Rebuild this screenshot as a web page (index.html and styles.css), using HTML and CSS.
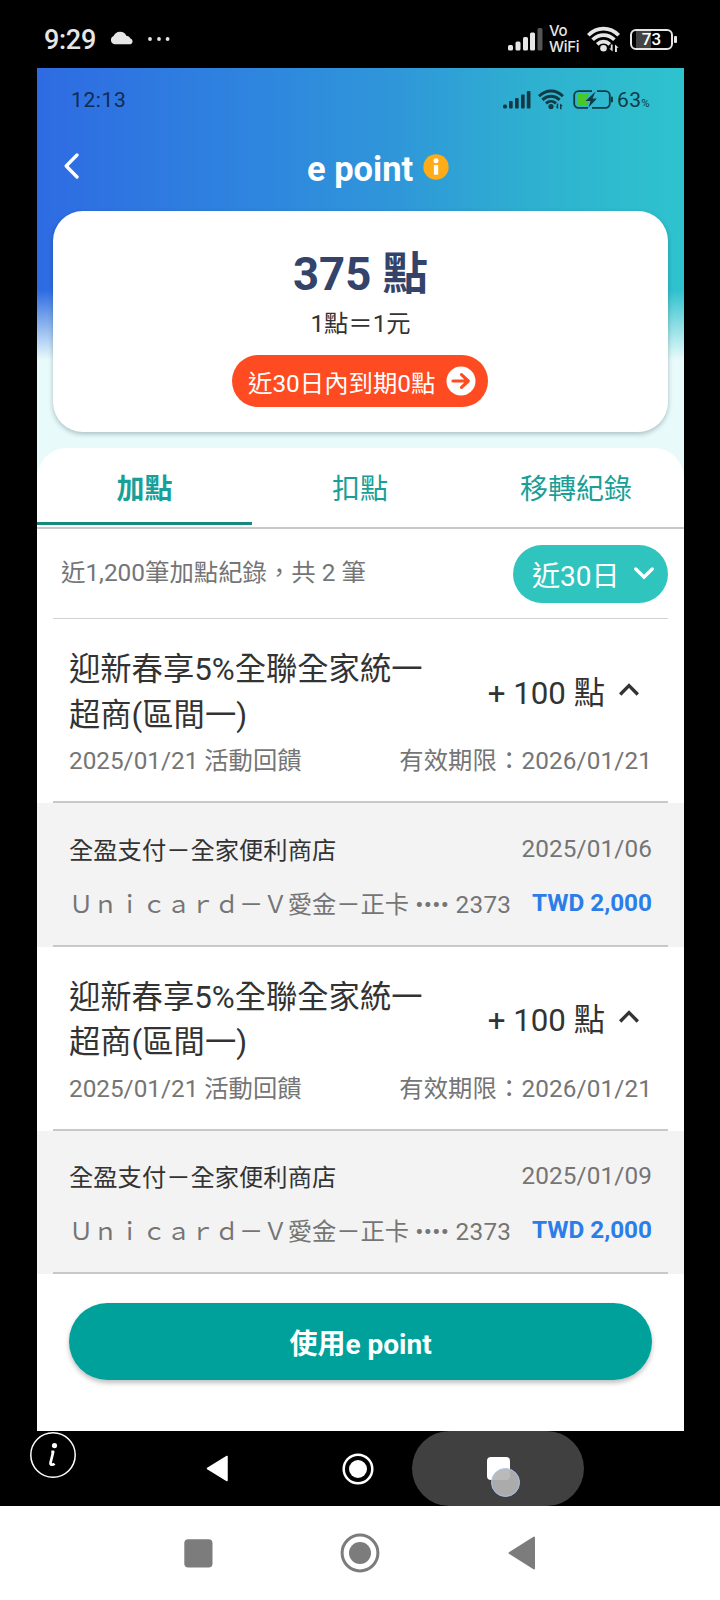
FILE: index.html
```html
<!DOCTYPE html>
<html lang="zh-Hant">
<head>
<meta charset="utf-8">
<title>e point</title>
<link rel="stylesheet" href="styles.css">
</head>
<body>
<svg width="0" height="0" class="defs">
  <symbol id="wifi" viewBox="0 0 33 26">
    <g fill="none" stroke="currentColor" stroke-width="3.7">
      <path d="M1.3 9.2C10 .3 23 .3 31.7 9.2"/>
      <path d="M5.600 13.800c6.300-6.200 15.500-6.200 21.800 0"/>
      <path d="M10.2 18.300c3.700-3.500 8.900-3.500 12.600 0"/>
    </g>
    <circle cx="16.500" cy="22.300" r="3.300" fill="currentColor"/>
    <path d="M25.600 18.500v7l-3.400-3h1.600v-4zM28 26v-7.500l3.600 3.200h-1.700V26z" fill="currentColor"/>
  </symbol>
</svg>

<header class="statusbar">
  <span class="clock">9:29</span>
  <svg class="cloud" width="24" height="14" viewBox="0 0 24 14"><path d="M4.5 13.2A4.3 4.3 0 0 1 3.6 5 7 7 0 0 1 16.400 4.700 5 5 0 0 1 20.500 7.600 3 3 0 0 1 20.800 13.200Z" fill="#e6e6e6"/></svg>
  <svg class="more" width="22" height="4" viewBox="0 0 22 4" fill="#e6e6e6"><circle cx="2" cy="2" r="1.9"/><circle cx="11" cy="2" r="1.9"/><circle cx="19.600" cy="2" r="1.900"/></svg>
  <div class="status-right">
    <svg width="35" height="23" viewBox="0 0 35 23" fill="#e6e6e6"><rect x="0" y="17" width="5" height="5.500" rx="1.500"/><rect x="7.500" y="13.500" width="5" height="9" rx="1.500"/><rect x="15" y="9" width="5" height="13.500" rx="1.500"/><rect x="22" y="4.500" width="5" height="18" rx="1.500"/><rect x="29.500" y="0" width="5" height="22.500" rx="1.500" fill="#555"/></svg>
    <span class="vowifi">Vo<br>WiFi</span>
    <svg class="wifi-big" width="33" height="26"><use href="#wifi"/></svg>
    <span class="battery"><span>73</span></span>
  </div>
</header>

<main class="app">
  <div class="inner-status">
    <span>12:13</span>
    <div class="inner-icons">
      <svg width="28" height="18" viewBox="0 0 28 18" fill="#103a44"><rect x="0" y="13.500" width="4" height="4" rx="1.500"/><rect x="6" y="10" width="3.700" height="7.500" rx="1"/><rect x="12" y="7" width="3.700" height="10.500" rx="1"/><rect x="18" y="3.500" width="3.700" height="14" rx="1"/><rect x="23.800" y="0" width="3.700" height="17.500" rx="1"/></svg>
      <svg class="wifi-small" width="26" height="20.500"><use href="#wifi"/></svg>
      <svg class="charging" width="40" height="19" viewBox="0 0 40 19"><path d="M4 4.800Q4 4 5 4H16L12 11h4l-2 4H5q-1 0-1-1z" fill="#4bc829"/><path d="M19 1.200H5.500a4.300 4.300 0 0 0-4.300 4.300v8a4.300 4.300 0 0 0 4.300 4.300H15M24 1.200h8.500a4.300 4.300 0 0 1 4.300 4.300v8a4.300 4.300 0 0 1-4.300 4.300H19" fill="none" stroke="#103a44" stroke-width="1.800"/><path d="M22.500 1.500 12.500 11h5l-2 6.500L24 8.500h-4.500z" fill="#103a44"/><rect x="37.900" y="6.500" width="2" height="6" rx="1" fill="#103a44"/></svg>
      <span class="pct">63<small>%</small></span>
    </div>
  </div>

  <div class="titlebar">
    <svg class="back" width="15" height="26" viewBox="0 0 15 26"><path d="M13 2 2.200 13 13 24" fill="none" stroke="#fff" stroke-width="3.300" stroke-linecap="round" stroke-linejoin="round"/></svg>
    <h1>e point</h1>
    <svg class="info" width="26" height="26" viewBox="0 0 26 26"><circle cx="13" cy="13" r="12.700" fill="#ffac18"/><circle cx="13" cy="6.700" r="2.500" fill="#fff"/><rect x="10.900" y="11" width="4.300" height="9.700" fill="#fff"/></svg>
  </div>

  <section class="card">
    <div class="balance">375 點</div>
    <div class="rate">1點＝1元</div>
    <div class="expiring"><span>近30日內到期0點</span>
      <svg width="30" height="30" viewBox="0 0 30 30"><circle cx="15" cy="15" r="14.500" fill="#fff"/><path d="M7 15h15M15.500 8.700 22.300 15l-6.800 6.300" fill="none" stroke="#ff4b21" stroke-width="3.200" stroke-linecap="round" stroke-linejoin="round"/></svg>
    </div>
  </section>

  <section class="sheet">
    <nav class="tabs">
      <span class="tab active">加點</span><span class="tab">扣點</span><span class="tab">移轉紀錄</span>
    </nav>
    <div class="filter">
      <span class="count">近1,200筆加點紀錄，共 2 筆</span>
      <span class="range">近30日<svg width="20" height="13" viewBox="0 0 20 13"><path d="m1.800 2 8.200 8.200L18.200 2" fill="none" stroke="#fff" stroke-width="3.300" stroke-linecap="round"/></svg></span>
    </div>

    <article class="entry">
      <div class="summary">
        <div class="headline"><h2>迎新春享5%全聯全家統一超商(區間一)</h2>
          <span class="points">+ 100 點<svg width="20" height="13" viewBox="0 0 20 13"><path d="m1.200 11.500 8.800-9 8.800 9" fill="none" stroke="#333" stroke-width="3.300"/></svg></span></div>
        <div class="line meta"><span>2025/01/21 活動回饋</span><span class="expiry">有效期限：2026/01/21</span></div>
      </div>
      <div class="detail">
        <div class="line"><span class="shop">全盈支付－全家便利商店</span><span class="date">2025/01/06</span></div>
        <div class="line"><span>Ｕｎｉｃａｒｄ－Ｖ愛金－正卡 <span class="masked">•••• 2373</span></span><b>TWD 2,000</b></div>
      </div>
    </article>
    <article class="entry">
      <div class="summary">
        <div class="headline"><h2>迎新春享5%全聯全家統一超商(區間一)</h2>
          <span class="points">+ 100 點<svg width="20" height="13" viewBox="0 0 20 13"><path d="m1.200 11.500 8.800-9 8.800 9" fill="none" stroke="#333" stroke-width="3.300"/></svg></span></div>
        <div class="line meta"><span>2025/01/21 活動回饋</span><span class="expiry">有效期限：2026/01/21</span></div>
      </div>
      <div class="detail">
        <div class="line"><span class="shop">全盈支付－全家便利商店</span><span class="date">2025/01/09</span></div>
        <div class="line"><span>Ｕｎｉｃａｒｄ－Ｖ愛金－正卡 <span class="masked">•••• 2373</span></span><b>TWD 2,000</b></div>
      </div>
    </article>

    <button class="use">使用e point</button>
  </section>
</main>

<nav class="inner-nav">
  <svg class="about" width="46" height="46" viewBox="0 0 46 46"><circle cx="23" cy="23" r="22.200" fill="none" stroke="#fff" stroke-width="1.500"/><circle cx="24.500" cy="13.600" r="2.600" fill="#fff"/><path d="M21.300 19.800h1.900L20.600 30.500q-.5 2.300 1.200 2.200 1.600 0 2.800-1" fill="none" stroke="#fff" stroke-width="2.700" stroke-linejoin="round"/></svg>
  <svg class="nav-back" width="22" height="27" viewBox="0 0 22 27"><path d="M21 1.500v24L1.500 13.500Z" fill="#fff" stroke="#fff" stroke-width="1.500" stroke-linejoin="round"/></svg>
  <svg class="nav-home" width="32" height="32" viewBox="0 0 32 32"><circle cx="16" cy="16" r="14.300" fill="none" stroke="#fff" stroke-width="2.500"/><circle cx="16" cy="16" r="9" fill="#fff"/></svg>
  <span class="ripple"><i class="square"></i><i class="touch"></i></span>
</nav>
<nav class="outer-nav">
  <svg width="29" height="29" viewBox="0 0 29 29"><rect x=".3" y=".3" width="28.200" height="28.200" rx="4" fill="#7c7c7c"/></svg>
  <svg class="outer-home" width="40" height="40" viewBox="0 0 40 40"><circle cx="20" cy="20" r="17.900" fill="none" stroke="#7c7c7c" stroke-width="3"/><circle cx="20" cy="20" r="11" fill="#7c7c7c"/></svg>
  <svg width="28" height="34" viewBox="0 0 28 34"><path d="M26 1.500v31L1.500 17Z" fill="#7c7c7c" stroke="#7c7c7c" stroke-width="2" stroke-linejoin="round"/></svg>
</nav>
</body>
</html>
```

FILE: styles.css
```css
* { box-sizing: border-box; }
body {
  margin: 0;
  width: 720px;
  height: 1600px;
  overflow: hidden;
  background: #000;
  font-family: Roboto, "Noto Sans CJK TC", sans-serif;
  color: #333;
}
svg { display: block; flex: none; }
h1, h2 { margin: 0; }
.defs { position: absolute; }

/* outer status bar */
.statusbar { height: 68px; padding: 0 44px; display: flex; align-items: center; color: #e6e6e6; }
.clock { width: 52px; font-size: 27px; line-height: 32px; font-weight: 500; padding-top: 11px; letter-spacing: -.3px; }
.cloud { margin: 8px 0 0 14px; }
.more { margin: 10px 0 0 14px; }
.status-right { margin-left: auto; display: flex; align-items: center; padding-top: 10px; }
.vowifi { margin-left: 6px; width: 32px; font: 500 15px/16px Inter, sans-serif; letter-spacing: -.3px; }
.wifi-big { margin-left: 6px; }
.battery {
  position: relative;
  width: 43px; height: 21px; margin: 0 4px 0 10px;
  border: 2px solid #e6e6e6; border-radius: 6px;
  background: linear-gradient(90deg, transparent 4px, #444 4px, #444 19px, transparent 19px);
  display: flex; justify-content: center; align-items: center;
  font-size: 17px; font-weight: 500; color: #fff;
}
.battery::after { content: ""; position: absolute; left: 42px; top: 5px; width: 3px; height: 7px; border-radius: 1px; background: #e6e6e6; }
.status-right { margin-right: -1px; }

/* app frame */
.app {
  width: 647px; height: 1363px; margin-left: 37px;
  background:
    linear-gradient(180deg, rgba(232,250,250,0) 222px, #e8fafa 292px),
    linear-gradient(90deg, #2e6be3 0, #2e81df 28%, #2f97d9 56%, #2eb0d0 76%, #2ec3ce 100%);
}
.inner-status { height: 63px; padding: 0 34px; display: flex; justify-content: space-between; align-items: center; font-size: 21px; color: #122b50; letter-spacing: .6px; }
.inner-icons { display: flex; align-items: center; color: #103a44; }
.wifi-small { margin-left: 7px; }
.charging { margin: 0 0 0 9px; }
.pct { margin-left: 4px; letter-spacing: .3px; }
.pct small { font-size: 11.500px; }

.titlebar { height: 80px; padding: 0 26px; display: flex; align-items: flex-start; }
.titlebar h1 { margin: 18px 0 0 228px; font-size: 34.500px; line-height: 40px; color: #fff; white-space: nowrap; width: 108px; }
.back { margin: 22px 0 0 1px; }
.info { margin: 23px 0 0 8px; }

.card {
  height: 221px; margin: 0 16px; padding-top: 36px;
  border-radius: 30px; background: #fff; box-shadow: 0 2px 5px rgba(0,40,50,.28);
  display: flex; flex-direction: column; align-items: center;
}
.balance { font-size: 45.500px; line-height: 56px; font-weight: 700; color: #33436a; }
.rate { font-size: 24.300px; line-height: 32px; margin-top: 5px; height: 47px; }
.expiring { height: 52px; width: 256px; margin-right: 1px; padding: 0 12px 0 16px; border-radius: 26px; background: #ff4b21; color: #fff; font-size: 24.400px; display: flex; justify-content: space-between; align-items: center; white-space: nowrap; }

/* records */
.sheet { margin-top: 16px; height: 983px; border-radius: 30px 30px 0 0; background: #fff; }
.tabs { height: 81px; border-bottom: 2px solid #c8c8c8; display: grid; grid-template-columns: 215px 216px 216px; }
.tab { height: 77px; display: flex; justify-content: center; align-items: center; font-size: 28px; color: #1a9f98; }
.tab.active { height: 76.500px; font-weight: 700; border-bottom: 3.500px solid #14897d; padding-top: 4px; }
.filter { height: 90px; margin: 0 16px; padding-left: 8px; display: flex; justify-content: space-between; align-items: center; border-bottom: 1.500px solid #d2d2d2; font-size: 24.400px; color: #757575; }
.count { margin-top: -6px; }
.range { width: 155px; height: 58px; padding: 0 14px 0 19px; border-radius: 29px; background: #30c4be; color: #fff; font-size: 28px; display: flex; align-items: center; justify-content: space-between; }

.entry { height: 327.500px; font-size: 24.300px; color: #757575; }
.summary { height: 184px; margin: 0 16px; padding: 28px 16px 0; border-bottom: 2px solid #c8c8c8; }
.headline { display: flex; justify-content: space-between; align-items: center; color: #333; }
.headline h2 { width: 358px; font-size: 31.300px; line-height: 45.500px; font-weight: 400; }
.points { display: flex; align-items: center; gap: 14px; font-size: 31.300px; margin: -5px 13px 0 0; white-space: nowrap; }
.points svg { margin-top: -2px; }
.line { display: flex; justify-content: space-between; align-items: center; height: 54px; white-space: nowrap; }
.line.meta { height: 41px; }
.expiry, .date { letter-spacing: .13px; }
.masked { letter-spacing: .3px; }
.detail { position: relative; height: 143.500px; padding: 18px 32px 0; background: #f3f3f3; }
.detail::after { content: ""; position: absolute; left: 16px; right: 16px; bottom: 0; height: 2px; background: #c8c8c8; }
.shop { color: #333; }
.line b { color: #2b7de9; }

.use { display: block; width: 583px; height: 77px; margin: 29px 0 0 32px; padding: 1px 0 0; border: 0; border-radius: 39px; background: #00a19a; color: #fff; font: 700 28px Roboto, "Noto Sans CJK TC", sans-serif; box-shadow: 0 3px 5px rgba(0,0,0,.25); }

/* navigation bars */
.inner-nav { height: 75px; padding-left: 30px; display: flex; align-items: center; }
.about { margin-top: -27px; }
.nav-back { margin-left: 130px; }
.nav-home { margin-left: 114px; }
.ripple { position: relative; margin-left: 38px; width: 172px; height: 75px; border-radius: 37.500px; background: #404040; }
.square { position: absolute; left: 75px; top: 26px; width: 23px; height: 23px; border-radius: 4px; background: #fff; }
.touch { position: absolute; left: 79px; top: 37px; width: 29px; height: 29px; border-radius: 50%; border: 1.500px solid #a9c4f0; background: rgba(180,180,180,.92); }
.outer-nav { height: 94px; padding: 0 184px; background: #fff; display: flex; justify-content: space-between; align-items: center; }
.outer-home { margin-left: -1px; }
```
